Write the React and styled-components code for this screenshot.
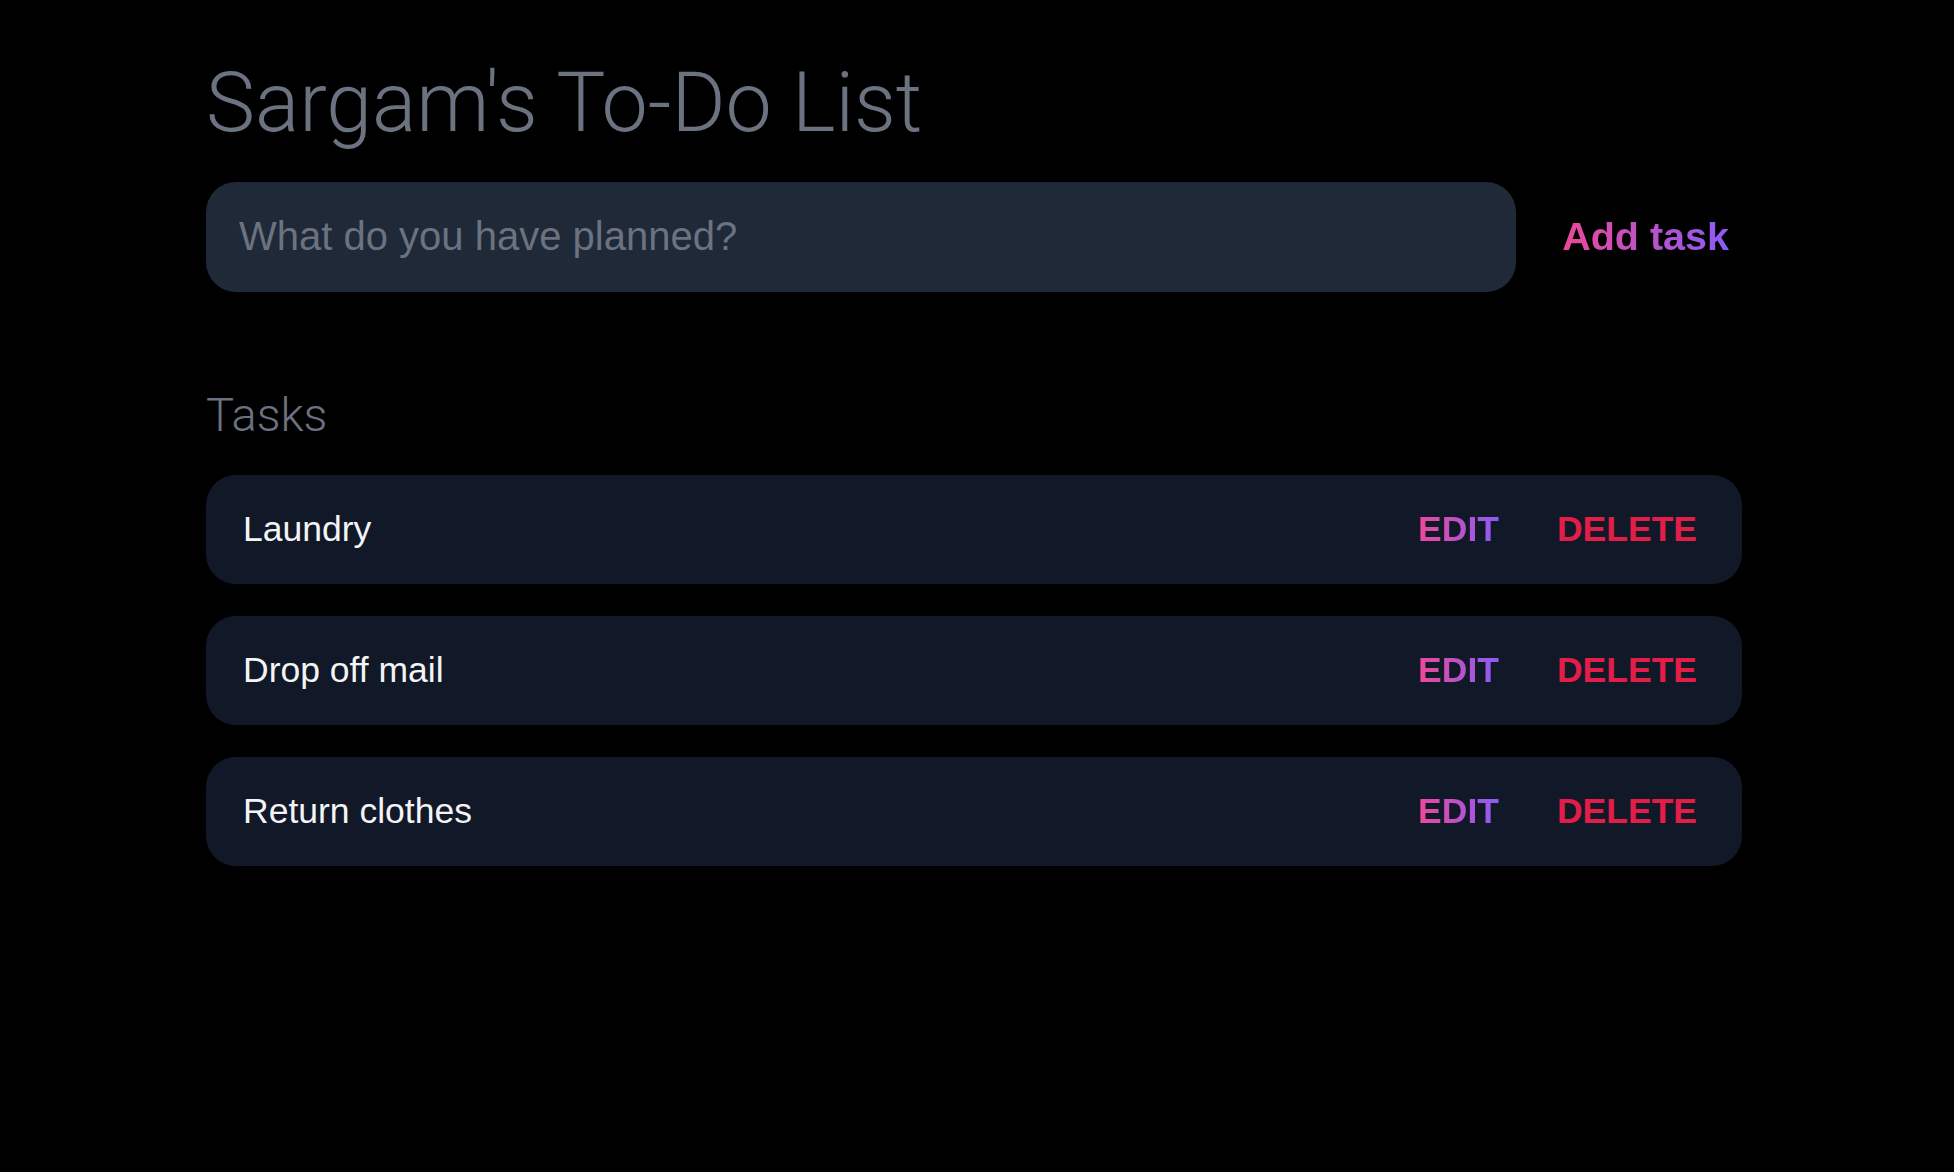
import React, { useState } from "react";
import styled, { createGlobalStyle } from "styled-components";

const GlobalStyle = createGlobalStyle`
  html, body {
    margin: 0;
    padding: 0;
    background: #000;
  }
  body {
    font-family: "Liberation Sans", Arial, sans-serif;
  }
`;

const Page = styled.main`
  width: 1536px;
  margin-left: 206px;
  padding-top: 62px;
`;

const Title = styled.h1`
  margin: 0;
  font-family: Roboto, "Liberation Sans", sans-serif;
  font-weight: 300;
  font-size: 82.5px;
  line-height: 1;
  color: #6b7280;
`;

const Form = styled.form`
  display: flex;
  align-items: center;
  gap: 46px;
  margin-top: 37px;
  padding-right: 13px;
`;

const Input = styled.input`
  flex: 1;
  height: 110px;
  box-sizing: border-box;
  padding: 0 33px;
  border: none;
  border-radius: 30px;
  background: #1f2937;
  color: #f3f4f6;
  font-family: "Liberation Sans", Arial, sans-serif;
  font-size: 40px;
  outline: none;
  &::placeholder {
    color: #6b7280;
  }
`;

const GradientButton = styled.button`
  display: inline-block;
  padding: 0;
  border: none;
  background: linear-gradient(to right, #ec4899, #8b5cf6);
  -webkit-background-clip: text;
  background-clip: text;
  color: transparent;
  font-family: "Liberation Sans", Arial, sans-serif;
  font-weight: 700;
  font-size: ${(p) => p.$size || 35.5}px;
  text-transform: ${(p) => (p.$upper ? "uppercase" : "none")};
  cursor: pointer;
`;

const DangerButton = styled.button`
  padding: 0;
  border: none;
  background: none;
  color: #e11d48;
  font-family: "Liberation Sans", Arial, sans-serif;
  font-weight: 700;
  font-size: 35.5px;
  cursor: pointer;
`;

const Heading = styled.h2`
  margin: 99px 0 0;
  font-family: Roboto, "Liberation Sans", sans-serif;
  font-weight: 300;
  font-size: 47px;
  line-height: 1;
  color: #6b7280;
`;

const List = styled.ul`
  list-style: none;
  margin: 37px 0 0;
  padding: 0;
  display: flex;
  flex-direction: column;
  gap: 32px;
`;

const Row = styled.li`
  display: flex;
  align-items: center;
  height: 109px;
  box-sizing: border-box;
  padding: 0 45px 0 37px;
  border-radius: 30px;
  background: #111827;
`;

const TaskName = styled.span`
  flex: 1;
  color: #f3f4f6;
  font-size: 35.5px;
`;

const Actions = styled.div`
  display: flex;
  align-items: center;
  gap: 58px;
`;

export default function App() {
  const [tasks] = useState(["Laundry", "Drop off mail", "Return clothes"]);
  const [text, setText] = useState("");

  return (
    <>
      <GlobalStyle />
      <Page>
        <Title>Sargam's To-Do List</Title>
        <Form onSubmit={(e) => e.preventDefault()}>
          <Input
            value={text}
            onChange={(e) => setText(e.target.value)}
            placeholder="What do you have planned?"
          />
          <GradientButton type="submit" $size={39.5}>
            Add task
          </GradientButton>
        </Form>
        <Heading>Tasks</Heading>
        <List>
          {tasks.map((t) => (
            <Row key={t}>
              <TaskName>{t}</TaskName>
              <Actions>
                <GradientButton $upper>Edit</GradientButton>
                <DangerButton>DELETE</DangerButton>
              </Actions>
            </Row>
          ))}
        </List>
      </Page>
    </>
  );
}
